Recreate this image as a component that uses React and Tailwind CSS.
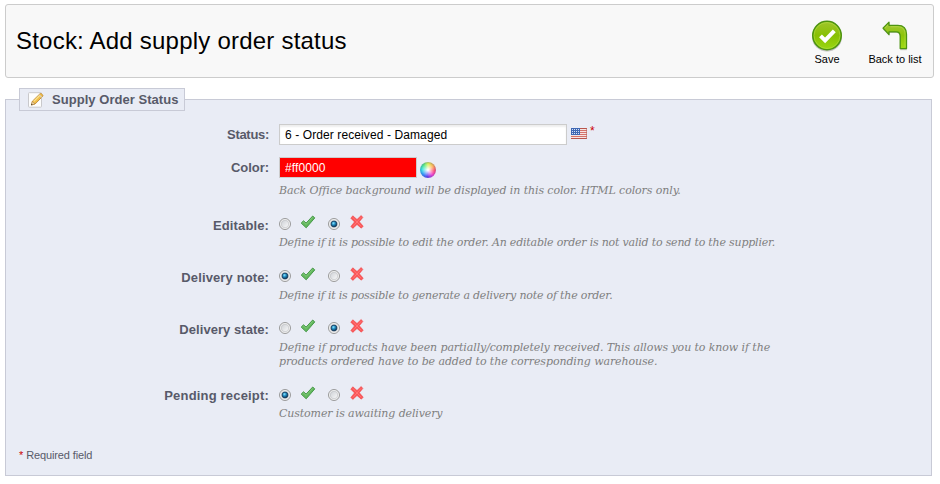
import React from "react";

const SaveIcon = () => (
  <svg width="32" height="32" viewBox="0 0 32 32">
    <defs>
      <linearGradient id="saveFill" x1="0" y1="0" x2="0" y2="1">
        <stop offset="0" stopColor="#a0c62c" />
        <stop offset="0.5" stopColor="#88c004" />
        <stop offset="1" stopColor="#9ad810" />
      </linearGradient>
    </defs>
    <ellipse cx="16" cy="17" rx="15" ry="14.6" fill="#000" opacity="0.22" />
    <circle cx="16" cy="15.5" r="14.2" fill="url(#saveFill)" stroke="#4d9410" strokeWidth="1.6" />
    <circle cx="16" cy="15.5" r="13" fill="none" stroke="#b7df4a" strokeWidth="0.8" opacity="0.7" />
    <path d="M9.500 15.800l4.600 4.600 9.200-9.600" fill="none" stroke="#fff" strokeWidth="4" />
  </svg>
);

const BackIcon = () => (
  <svg width="32" height="32" viewBox="0 0 32 32">
    <defs>
      <linearGradient id="backFill" x1="0" y1="0" x2="0" y2="1">
        <stop offset="0" stopColor="#a5c83c" />
        <stop offset="0.5" stopColor="#8cc40a" />
        <stop offset="1" stopColor="#a0dc14" />
      </linearGradient>
    </defs>
    <path
      d="M3.8 8.6l6.8-6.200v3.400h8.600c5.600 0 8.600 3.600 8.600 9V29.300h-6.400V16.600c0-3-1-4.400-3.800-4.400h-7V15z"
      fill="#000" opacity="0.18" transform="translate(0 .9)"
    />
    <path
      d="M4 8.100l6-6v3.200h8.800c5.800 0 8.700 3.600 8.700 9V28.600h-6.300V16.400c0-3.200-1.100-4.500-4-4.500H10v2.700z"
      fill="url(#backFill)" stroke="#4d9410" strokeWidth="1.300" strokeLinejoin="round"
    />
    <path d="M6 8l3-3M11.500 6.700h7.300c4.900 0 7.300 2.900 7.300 7.600v13" fill="none" stroke="#c2e35c" strokeWidth="0.700" opacity="0.7" />
  </svg>
);

const EditIcon = () => (
  <svg width="16" height="16" viewBox="0 0 16 16" className="shrink-0">
    <rect x="0.500" y="0.7" width="13" height="14.500" rx="0.800" fill="#fdfdfd" stroke="#c9c9cc" />
    <path d="M3.400 13l1-3.800 7.400-7.300c.6-.5 1.300-.5 1.900 0l.8.8c.5.600.5 1.200 0 1.800L7.100 12z" fill="#f0bd48" stroke="#b8822c" strokeWidth="0.8" />
    <path d="M5.800 9.400l6-6" stroke="#fbe38f" strokeWidth="1.300" />
    <path d="M11.200 2.800l2.600 2.500" stroke="#d8d2c4" strokeWidth="1.100" />
    <path d="M3.400 13l1-3.400 2.400 2.200z" fill="#f3ddb5" stroke="#a5793a" strokeWidth="0.5" />
    <path d="M3.100 13.300l.5-1.500 1 1z" fill="#333" />
  </svg>
);

const Flag = () => (
  <svg width="16" height="11" viewBox="0 0 16 11" shapeRendering="crispEdges">
    <rect width="16" height="11" fill="#f6e4e2" />
    {[0, 2, 4, 6, 8, 10].map((y) => (
      <rect key={y} y={y} width="16" height="1" fill={y === 0 || y === 10 ? "#b9554c" : "#d4746c"} />
    ))}
    <rect width="9" height="7" fill="#3f68b4" />
    {[1, 3, 5].map((y) =>
      [1, 3, 5, 7].map((x) => <rect key={`${x}-${y}`} x={x} y={y} width="1" height="1" fill="#d5e0f4" />)
    )}
    <rect x="15" width="1" height="11" fill="#b9655c" opacity="0.6" />
  </svg>
);

const ColorWheel = () => (
  <span className="block size-4 rounded-full bg-[radial-gradient(circle,#fff_3%,#ffffff88_28%,transparent_58%),conic-gradient(#d8f050,#ffb050_50deg,#ff5070_95deg,#f040d0_140deg,#6040f0_185deg,#3090f8_225deg,#30e0e0_275deg,#50e880_320deg,#d8f050)] shadow-[inset_0_0_1px_1px_#5555aa55]" />
);

const Check = () => (
  <svg width="16" height="16" viewBox="0 0 16 16">
    <path d="M1.200 9.100l2.300-2.300 2.600 2.300L12.700 2l2.100 1.900-8.600 9.900z" fill="#62b85c" stroke="#47994a" strokeWidth="1" strokeLinejoin="round" />
    <path d="M2.500 9l1.100-1 2.600 2.400 6.600-7.100" fill="none" stroke="#8acd82" strokeWidth="0.800" />
  </svg>
);

const Cross = () => (
  <svg width="16" height="16" viewBox="0 0 16 16">
    <path
      d="M1.800 4.200l2-2.400L8 5.500l4.200-4 1.600 2-3.500 4.200 3.900 4.500-1.900 2L8 10.500l-4.200 3.900-1.900-2 3.600-4.500z"
      fill="#fb5557" stroke="#ee4446" strokeWidth="0.600" strokeLinejoin="round"
    />
    <path d="M3.800 3.400l8.400 9M12.200 3.300l-8.400 9.300" stroke="#ff7b7a" strokeWidth="0.900" />
  </svg>
);

const Radio = ({ on }) => (
  <svg width="12" height="12" viewBox="0 0 12 12">
    <defs>
      <radialGradient id="dot" cx="0.4" cy="0.35" r="0.65">
        <stop offset="0" stopColor="#8fe4fb" />
        <stop offset="0.45" stopColor="#2491c6" />
        <stop offset="1" stopColor="#0b3152" />
      </radialGradient>
      <linearGradient id="well" x1="0" y1="0" x2="1" y2="1">
        <stop offset="0" stopColor="#cdd0d5" />
        <stop offset="1" stopColor="#fafafa" />
      </linearGradient>
    </defs>
    <circle cx="6" cy="6" r="5.500" fill="#f6f6f6" stroke="#8e8f8f" strokeWidth="0.900" />
    <circle cx="6" cy="6" r="3.800" fill="url(#well)" stroke="#b8babd" strokeWidth="0.600" />
    {on && <circle cx="6" cy="6" r="2.900" fill="url(#dot)" stroke="#123a5c" strokeWidth="0.800" />}
  </svg>
);

const Row = ({ label, height, labelPad, tracking = "tracking-[0.12px]", children }) => (
  <div className={`flex gap-[10px] ${height}`}>
    <div className={`w-[263px] shrink-0 text-right text-[13px] leading-[16px] font-bold text-[#585a69] ${tracking} ${labelPad}`}>
      {label}
    </div>
    <div className="flex flex-col">{children}</div>
  </div>
);

const Hint = ({ children, className }) => (
  <p className={`font-['DejaVu_Serif',serif] text-[11px] leading-[14px] whitespace-nowrap text-[#7f7f7f] italic ${className}`}>
    {children}
  </p>
);

const YesNo = ({ yes }) => (
  <div className="flex h-[18px]">
    <span className="mt-[3px] w-[21px] shrink-0"><Radio on={yes} /></span>
    <span className="mt-[-1px] w-[28px] shrink-0"><Check /></span>
    <span className="mt-[3px] w-[21px] shrink-0"><Radio on={!yes} /></span>
    <span className="mt-[-1px]"><Cross /></span>
  </div>
);

export default function App() {
  return (
    <div className="h-[484px] w-[940px] overflow-hidden bg-white pt-1 pl-[5px] font-['Liberation_Sans',Arial,sans-serif]">
      <header className="flex h-[74px] w-[929px] justify-between rounded-[3px] border border-[#cccccc] bg-[#f8f8f8] pl-[10px]">
        <h1 className="mt-[22px] text-[24px] leading-[28px] tracking-[0.22px] text-black">Stock: Add supply order status</h1>
        <nav className="mt-[15px] flex pr-1 text-[11px] leading-[13px] text-black">
          <a className="flex w-[68px] flex-col items-center gap-px"><SaveIcon />Save</a>
          <a className="flex w-[68px] flex-col items-center gap-px whitespace-nowrap"><BackIcon />Back to list</a>
        </nav>
      </header>

      <section className="mt-[21px] h-[377px] w-[927px] border border-[#c8cad6] bg-[#e9ecf5]">
        <h2 className="-mt-[12px] ml-[13px] flex h-[23px] w-[166px] items-center gap-2 border border-[#c8cad6] bg-[#e9ecf5] pt-px pl-2 text-[13px] font-bold tracking-[0.04px] whitespace-nowrap text-[#585a69]">
          <EditIcon />
          Supply Order Status
        </h2>

        <div className="mt-[13px]">
          <Row label="Status:" height="h-[33px]" labelPad="pt-[3px]" tracking="tracking-[-0.3px]">
            <div className="flex">
              <input
                defaultValue="6 - Order received - Damaged"
                className="h-[21px] w-[288px] border border-[#cccccc] bg-white px-[5px] text-[12px] tracking-[0.1px] text-black shadow-[inset_0_2px_2px_#eeeeee] outline-none"
              />
              <span className="mt-1 ml-1"><Flag /></span>
              <sup className="top-0 mt-[1px] ml-[3px] text-[12px] leading-[12px] text-[#cc0000]">*</sup>
            </div>
          </Row>
          <Row label="Color:" height="h-[58px]" labelPad="pt-[3px]" tracking="tracking-[-0.05px]">
            <div className="flex">
              <input
                defaultValue="#ff0000"
                className="h-[21px] w-[138px] border border-[#cccccc] bg-[#ff0000] px-[5px] text-[12px] tracking-[0.1px] text-white outline-none"
              />
              <span className="mt-[5px] ml-[3px]"><ColorWheel /></span>
            </div>
            <Hint className="mt-[6px] tracking-[-0.1px]">Back Office background will be displayed in this color. HTML colors only.</Hint>
          </Row>
          <Row label="Editable:" height="h-[52px]" labelPad="pt-[3px]">
            <YesNo yes={false} />
            <Hint className="mt-[3px] tracking-[-0.2px]">Define if it is possible to edit the order. An editable order is not valid to send to the supplier.</Hint>
          </Row>
          <Row label="Delivery note:" height="h-[52px]" labelPad="pt-[3px]">
            <YesNo yes={true} />
            <Hint className="mt-1 tracking-[-0.21px]">Define if it is possible to generate a delivery note of the order.</Hint>
          </Row>
          <Row label="Delivery state:" height="h-[67px]" labelPad="pt-[3px]" tracking="tracking-[0.05px]">
            <YesNo yes={false} />
            <Hint className="mt-1 tracking-[-0.1px]">Define if products have been partially/completely received. This allows you to know if the</Hint>
            <Hint className="tracking-[-0.09px]">products ordered have to be added to the corresponding warehouse.</Hint>
          </Row>
          <Row label="Pending receipt:" height="h-[62px]" labelPad="pt-[2px]" tracking="tracking-[0.18px]">
            <YesNo yes={true} />
            <Hint className="mt-[3px] tracking-[-0.12px]">Customer is awaiting delivery</Hint>
          </Row>
        </div>

        <p className="ml-[13px] flex gap-[3px] text-[11px] leading-[14px] tracking-[-0.12px] text-[#585a69]">
          <span className="text-[#cc0000]">*</span>Required field
        </p>
      </section>
    </div>
  );
}
